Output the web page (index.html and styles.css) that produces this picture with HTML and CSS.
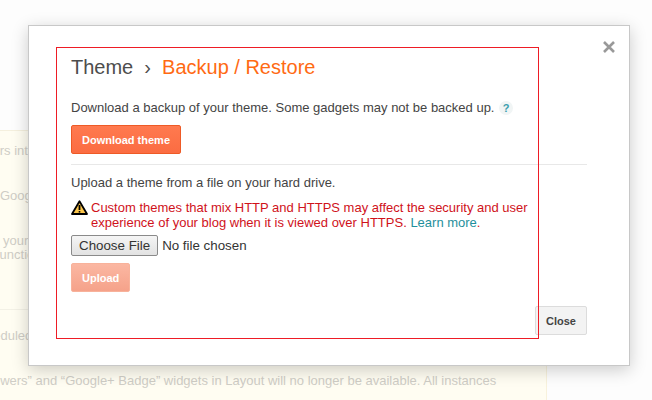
FILE: index.html
```html
<!DOCTYPE html>
<html lang="en">
<head>
    <meta charset="UTF-8">
    <title>Theme - Backup / Restore</title>
    <link rel="stylesheet" href="styles.css">
</head>
<body>
    <!-- Faded page behind the dialog -->
    <div class="page">
        <div class="notice">
            <p class="notice-line line-a">Followers into</p>
            <p class="notice-line line-b">Google</p>
            <p class="notice-line line-c">your</p>
            <p class="notice-line line-d">functions</p>
            <p class="notice-line line-e">scheduled</p>
            <p class="notice-line line-f">Followers” and “Google+ Badge” widgets in Layout will no longer be available. All instances</p>
        </div>
    </div>

    <div class="dialog">
        <button class="dialog-x" aria-label="Close">
            <svg width="12" height="12" viewBox="0 0 12 12">
                <path d="M1 1L11 11M11 1L1 11" stroke="#999" stroke-width="2.6" fill="none"/>
            </svg>
        </button>

        <h1 class="title">
            <span>Theme</span>
            <span class="crumb">›</span>
            <span class="title-current">Backup / Restore</span>
        </h1>

        <p class="line">Download a backup of your theme. Some gadgets may not be backed up. <span class="help">?</span></p>
        <button class="btn btn-primary">Download theme</button>

        <hr class="divider">

        <p class="line">Upload a theme from a file on your hard drive.</p>
        <div class="warning">
            <svg class="warning-icon" width="17" height="15" viewBox="0 0 17 15">
                <path d="M8.5 1.2L16 14H1z" fill="#fbc54a" stroke="#000" stroke-width="1.8" stroke-linejoin="round"/>
                <path d="M8.5 5v5" stroke="#000" stroke-width="1.8"/>
                <path d="M8.5 11v1.6" stroke="#000" stroke-width="1.6"/>
            </svg>
            <p>Custom themes that mix HTTP and HTTPS may affect the security and user experience of your blog when it is viewed over HTTPS. <a href="#">Learn more</a>.</p>
        </div>
        <input class="file" type="file">
        <button class="btn btn-primary btn-disabled">Upload</button>

        <div class="dialog-footer">
            <button class="btn btn-plain">Close</button>
        </div>
    </div>

    <!-- Red annotation box drawn over the screenshot -->
    <div class="annotation"></div>
</body>
</html>
```

FILE: styles.css
```css
html, body {
    height: 100%;
}

body {
    margin: 0;
    background-color: #fdfdfd;
    font-family: 'Liberation Sans', Arial, sans-serif;
    color: #444;
    overflow: hidden;
}

/* Page behind the dialog */
.page {
    height: 400px;
    padding-top: 130px;
    box-sizing: border-box;
    overflow: hidden;
}

.notice {
    width: 547px;
    height: 270px;
    padding-top: 12px;
    box-sizing: border-box;
    background-color: #fffdf2;
    border-right: 1px solid #f8f2dc;
    border-top: 1px solid #f5f0de;
    overflow: hidden;
}

.notice-line {
    margin: 0;
    font-size: 13px;
    line-height: 15px;
    color: #cfcdc6;
    white-space: nowrap;
}

.line-a { margin-left: -45px; }
.line-b { margin: 30px 0 0; }
.line-c { margin: 30px 0 0 3px; }
.line-d { margin: -1px 0 0 -4px; }
.line-e { margin: 47px 0 0 -27px; padding-top: 18px; border-top: 1px solid #f3f1e6; }
.line-f { margin: 30px 0 0 -28px; }

/* Dialog */
.dialog {
    position: absolute;
    left: 28px;
    top: 25px;
    width: 602px;
    height: 341px;
    padding: 0 42px;
    box-sizing: border-box;
    background-color: #fff;
    border: 1px solid #c8c8c8;
    box-shadow: 0 4px 16px rgba(0, 0, 0, 0.2);
}

.dialog-x {
    position: absolute;
    right: 14px;
    top: 15px;
    padding: 0;
    width: 12px;
    height: 12px;
    border: none;
    background: none;
}

.title {
    margin: 30px 0 0;
    font-size: 20px;
    line-height: 23px;
    font-weight: normal;
    color: #4d4d4d;
}

.crumb {
    margin: 0 5.5px;
}

.title-current {
    color: #ff6a13;
}

.line {
    margin: 21px 0 0;
    font-size: 13px;
    line-height: 15px;
}

.help {
    display: inline-block;
    width: 14px;
    height: 14px;
    margin-left: 1px;
    border-radius: 50%;
    background-color: #f1f5f5;
    color: #3a9eae;
    font-size: 11px;
    font-weight: bold;
    line-height: 14px;
    text-align: center;
}

.btn {
    display: block;
    height: 29px;
    padding: 0 10px;
    border-radius: 2px;
    font-family: inherit;
    font-size: 11px;
    font-weight: bold;
}

.btn-primary {
    margin-top: 10px;
    border: 1px solid #ee5a26;
    background: linear-gradient(#ff7a4f, #fb6c42);
    color: #fff;
}

.btn-disabled {
    margin-top: 7px;
    border-color: #f8b29b;
    background: linear-gradient(#fbb7a2, #f5a28a);
}

.btn-plain {
    padding: 0 10px;
    border: 1px solid #dcdcdc;
    background-color: #f3f3f3;
    color: #444;
}

.divider {
    height: 1px;
    margin: 10px 0 0;
    border: none;
    background-color: #e8e8e8;
}

.divider + .line {
    margin-top: 10px;
}

.warning {
    display: flex;
    gap: 3px;
    margin-top: 10px;
}

.warning-icon {
    flex: none;
}

.warning p {
    margin: 0;
    font-size: 13px;
    line-height: 15px;
    color: #d0121b;
}

.warning a {
    color: #1f8f9c;
    text-decoration: none;
}

.file {
    display: block;
    margin-top: 5px;
    font-family: inherit;
    font-size: 13.33px;
    color: #333;
}

.file::file-selector-button {
    height: 21px;
    padding: 0 7px;
    margin-right: 4px;
    border: 1px solid #8a8a8a;
    border-radius: 2px;
    background: linear-gradient(#f5f5f5, #e2e2e2);
    font-family: inherit;
    font-size: 13.33px;
    color: #333;
}

.dialog-footer {
    position: absolute;
    right: 42px;
    bottom: 30px;
}

/* Annotation */
.annotation {
    position: absolute;
    left: 56px;
    top: 47px;
    width: 483px;
    height: 292px;
    box-sizing: border-box;
    border: 1px solid #ee1c25;
}
```
